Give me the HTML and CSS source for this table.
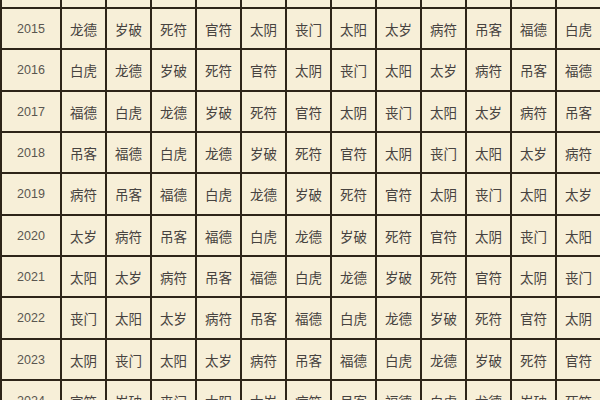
FILE: index.html
```html
<!DOCTYPE html>
<html lang="zh-CN">
<head>
<meta charset="utf-8">
<title>年神方位表</title>
<link rel="stylesheet" href="styles.css">
</head>
<body>
<div class="sheet">
  <div class="grid">
    <div class="y"></div><div></div><div></div><div></div><div></div><div></div><div></div><div></div><div></div><div></div><div></div><div></div><div></div>

    <div class="y">2015</div><div>龙德</div><div>岁破</div><div>死符</div><div>官符</div><div>太阴</div><div>丧门</div><div>太阳</div><div>太岁</div><div>病符</div><div>吊客</div><div>福德</div><div>白虎</div>

    <div class="y">2016</div><div>白虎</div><div>龙德</div><div>岁破</div><div>死符</div><div>官符</div><div>太阴</div><div>丧门</div><div>太阳</div><div>太岁</div><div>病符</div><div>吊客</div><div>福德</div>

    <div class="y">2017</div><div>福德</div><div>白虎</div><div>龙德</div><div>岁破</div><div>死符</div><div>官符</div><div>太阴</div><div>丧门</div><div>太阳</div><div>太岁</div><div>病符</div><div>吊客</div>

    <div class="y">2018</div><div>吊客</div><div>福德</div><div>白虎</div><div>龙德</div><div>岁破</div><div>死符</div><div>官符</div><div>太阴</div><div>丧门</div><div>太阳</div><div>太岁</div><div>病符</div>

    <div class="y">2019</div><div>病符</div><div>吊客</div><div>福德</div><div>白虎</div><div>龙德</div><div>岁破</div><div>死符</div><div>官符</div><div>太阴</div><div>丧门</div><div>太阳</div><div>太岁</div>

    <div class="y">2020</div><div>太岁</div><div>病符</div><div>吊客</div><div>福德</div><div>白虎</div><div>龙德</div><div>岁破</div><div>死符</div><div>官符</div><div>太阴</div><div>丧门</div><div>太阳</div>

    <div class="y">2021</div><div>太阳</div><div>太岁</div><div>病符</div><div>吊客</div><div>福德</div><div>白虎</div><div>龙德</div><div>岁破</div><div>死符</div><div>官符</div><div>太阴</div><div>丧门</div>

    <div class="y">2022</div><div>丧门</div><div>太阳</div><div>太岁</div><div>病符</div><div>吊客</div><div>福德</div><div>白虎</div><div>龙德</div><div>岁破</div><div>死符</div><div>官符</div><div>太阴</div>

    <div class="y">2023</div><div>太阴</div><div>丧门</div><div>太阳</div><div>太岁</div><div>病符</div><div>吊客</div><div>福德</div><div>白虎</div><div>龙德</div><div>岁破</div><div>死符</div><div>官符</div>

    <div class="y">2024</div><div>官符</div><div>岁破</div><div>丧门</div><div>太阳</div><div>太岁</div><div>病符</div><div>吊客</div><div>福德</div><div>白虎</div><div>龙德</div><div>岁破</div><div>死符</div>
  </div>
</div>
</body>
</html>
```
FILE: styles.css
```css
html, body {
  margin: 0;
  padding: 0;
  background: #f7efd8;
}
.sheet {
  width: 600px;
  height: 400px;
  overflow: hidden;
}
.grid {
  display: grid;
  width: 602px;
  grid-template-columns: 58px repeat(12, 43px);
  grid-template-rows: 7px repeat(3, 39px 40px 39px) 40px;
  gap: 2px;
  padding: 0 2px;
  background: #2e2519;
}
.grid > div {
  background: #f7efd8;
  display: flex;
  align-items: center;
  justify-content: center;
  font-family: "Noto Sans CJK SC", "Noto Sans", sans-serif;
  font-size: 13.5px;
  color: #474340;
  white-space: nowrap;
  overflow: hidden;
}
.grid > .y {
  font-family: "Liberation Sans", "DejaVu Sans", sans-serif;
  font-size: 12.5px;
  color: #5a5650;
}
```
